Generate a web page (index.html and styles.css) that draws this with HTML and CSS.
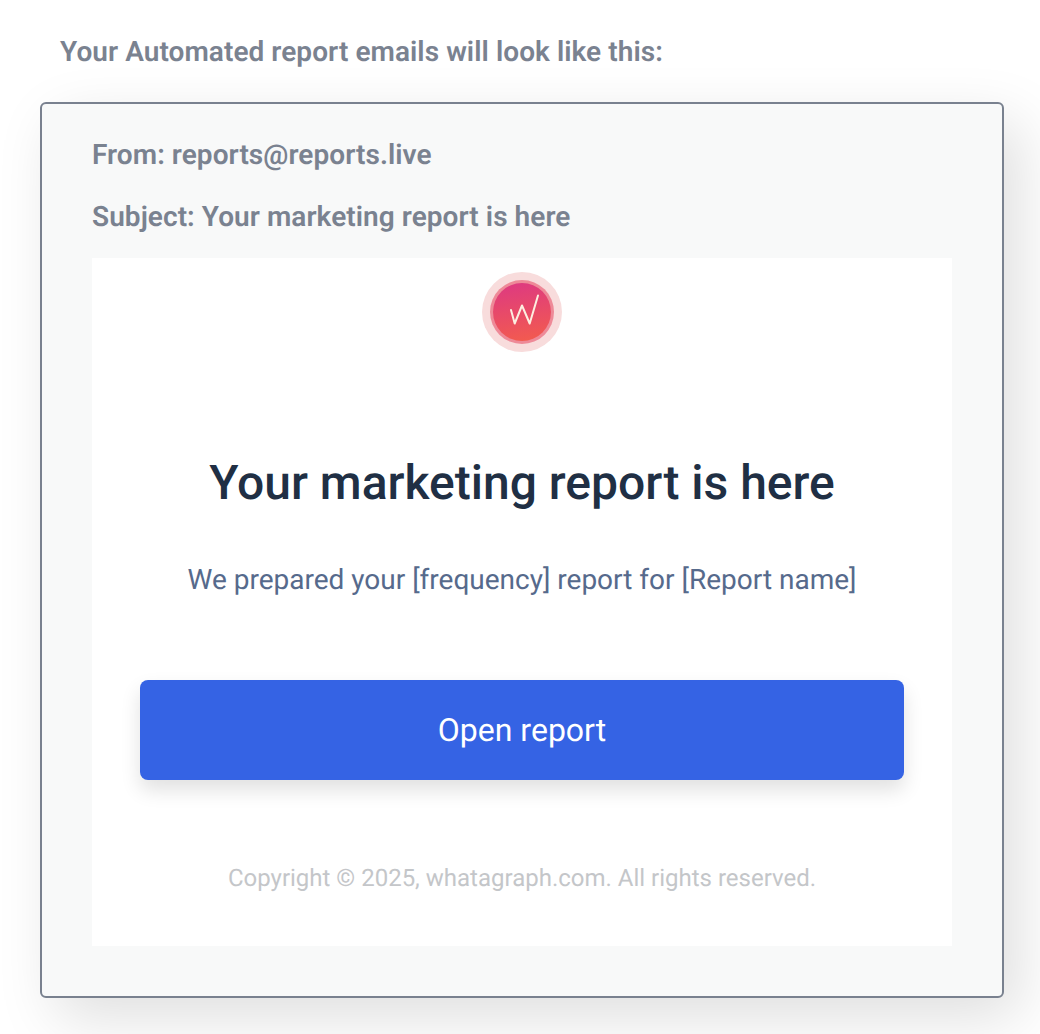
FILE: index.html
```html
<!DOCTYPE html>
<html lang="en">
<head>
<meta charset="utf-8">
<title>Automated report preview</title>
<link rel="stylesheet" href="styles.css">
</head>
<body>
<main class="page">
  <h2 class="intro">Your Automated report emails will look like this:</h2>
  <section class="card">
    <p class="meta meta-from">From: reports@reports.live</p>
    <p class="meta meta-subject">Subject: Your marketing report is here</p>
    <div class="email">
      <div class="logo">
        <svg class="logo-svg" width="80" height="80" viewBox="0 0 80 80" aria-hidden="true">
          <defs>
            <linearGradient id="g" x1="0.35" y1="0" x2="0.5" y2="1">
              <stop offset="0" stop-color="#de3a80"/>
              <stop offset="1" stop-color="#f25a50"/>
            </linearGradient>
          </defs>
          <circle cx="40" cy="40" r="40" fill="#f8dcdc"/>
          <circle cx="40" cy="40" r="32" fill="#ee8a98"/>
          <circle cx="40" cy="40" r="29" fill="url(#g)"/>
          <path d="M29 38 L32.7 51.5 L40 33.5 L47.7 51.5 L56 23.5" fill="none" stroke="#fdeee0" stroke-width="2" stroke-linecap="round" stroke-linejoin="round"/>
        </svg>
      </div>
      <h1 class="title">Your marketing report is here</h1>
      <p class="lead">We prepared your [frequency] report for [Report name]</p>
      <a class="button">Open report</a>
      <p class="copy">Copyright © 2025, whatagraph.com. All rights reserved.</p>
    </div>
  </section>
</main>
</body>
</html>
```

FILE: styles.css
```css
* { box-sizing: border-box; }
html, body { margin: 0; padding: 0; background: #fff; }
body { font-family: Roboto, "Liberation Sans", sans-serif; height: 1034px; overflow: hidden; text-rendering: geometricPrecision; }
.page { padding: 36px 36px 0 40px; }
.intro { margin: 0 0 35px 20px; font-size: 28px; line-height: 31px; font-weight: 600; letter-spacing: .06px; color: #7a8290; }
.card {
  width: 964px; height: 896px; padding: 0 50px;
  background: #f8f9f9; border: 2px solid #79818f; border-radius: 6px;
  box-shadow: 16px 20px 60px rgba(0,0,0,.13);
}
.meta { margin: 0; font-size: 28px; line-height: 31px; font-weight: 600; letter-spacing: .06px; color: #7a8290; }
.meta-from { padding-top: 35px; }
.meta-subject { padding-top: 31px; }
.email {
  margin-top: 26px; height: 688px; background: #fff;
  display: flex; flex-direction: column; align-items: center;
  padding: 14px 48px 0;
}
.logo { height: 80px; }
.logo-svg { display: block; }
.title { margin: 103px 0 0; font-size: 48px; line-height: 56px; font-weight: 500; color: #202f44; }
.lead { margin: 52px 0 0; font-size: 28px; line-height: 33px; font-weight: 400; color: #566a8c; }
.button {
  margin-top: 84px; width: 100%; height: 100px;
  display: flex; align-items: center; justify-content: center;
  background: #3563e4; border-radius: 8px; color: #fff; font-size: 32px;
  box-shadow: 0 10px 20px rgba(0,0,0,.12);
}
.copy { margin: 84px 0 0; font-size: 24px; line-height: 28px; color: #c4c6c9; }
```
